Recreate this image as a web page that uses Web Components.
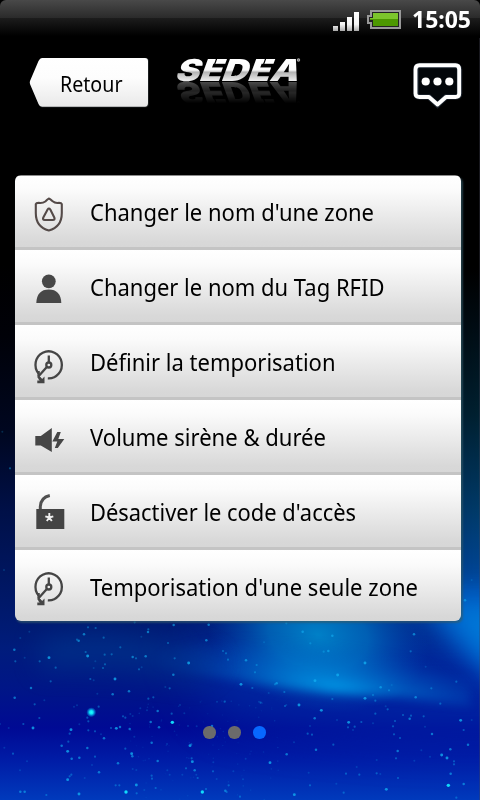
<!DOCTYPE html>
<html lang="fr">
<head>
<meta charset="utf-8">
<title>SEDEA</title>
<style>
html,body{margin:0;height:100%;background:#000;overflow:hidden}
body{font-family:"Noto Sans","Open Sans",sans-serif;color:#000}
</style>
</head>
<body>
<alarm-screen>
  <status-bar slot="status" time="15:05"></status-bar>
  <title-bar slot="header" back="Retour"></title-bar>
  <menu-list>
    <menu-row icon="shield" w="284" first>Changer le nom d'une zone</menu-row>
    <menu-row icon="user" w="294.5">Changer le nom du Tag RFID</menu-row>
    <menu-row icon="clock" w="245.5">Définir la temporisation</menu-row>
    <menu-row icon="siren" w="236">Volume sirène &amp; durée</menu-row>
    <menu-row icon="lock" w="266">Désactiver le code d'accès</menu-row>
    <menu-row icon="clock" w="328" last>Temporisation d'une seule zone</menu-row>
  </menu-list>
  <page-dots slot="footer" count="3" active="2"></page-dots>
</alarm-screen>

<script>
class BaseElement extends HTMLElement {
  connectedCallback() {
    if (this.shadowRoot) return;
    this.attachShadow({ mode: 'open' }).innerHTML = this.render();
    this.ready();
  }
  ready() {}
}

/* Text squeezed or stretched horizontally to an exact advance width. */
customElements.define('fit-text', class extends BaseElement {
  render() {
    return `<style>:host{display:block;white-space:nowrap;width:var(--w)}
      span{display:inline-block;transform-origin:0 50%}</style><span><slot></slot></span>`;
  }
  ready() {
    const w = +this.getAttribute('w');
    this.style.setProperty('--w', w + 'px');
    const s = this.shadowRoot.querySelector('span');
    s.style.transform = `scaleX(${w / s.getBoundingClientRect().width})`;
  }
});

customElements.define('night-sky', class extends BaseElement {
  render() {
    /* x, y, brightness (1-5); coordinates in thirds of a pixel, origin at y=600 */
    const stars = [
      [43,149,3],[46,184,2],[61,114,1],[88,95,1],[119,184,2],[147,173,4],[167,203,2],[152,244,2],[93,264,3],[44,293,3],[104,313,2],[133,301,1],
      [118,354,2],[99,384,4],[70,372,2],[26,384,1],[0,372,1],[252,103,3],[264,82,2],[287,84,2],[311,113,2],[236,122,3],[231,119,2],[263,168,4],
      [257,156,2],[286,184,1],[314,164,2],[335,163,2],[315,193,2],[309,204,2],[281,204,1],[361,142,2],[398,171,3],[408,175,2],[437,169,3],[424,110,1],
      [444,96,3],[445,88,2],[404,67,2],[521,75,3],[504,129,2],[524,175,2],[566,189,4],[619,121,3],[626,74,3],[669,153,2],[678,160,2],[684,179,2],
      [520,224,3],[417,208,2],[425,202,1],[345,237,4],[271,237,2],[281,241,1],[338,283,3],[387,274,3],[292,281,1],[296,320,2],[222,320,1],[231,316,1],
      [460,292,2],[445,296,2],[509,265,2],[496,261,1],[540,315,1],[473,333,3],[515,341,2],[553,340,1],[517,367,5],[452,366,3],[477,382,3],[389,387,3],
      [369,349,2],[376,353,2],[398,348,1],[391,342,1],[421,325,1],[265,364,2],[262,353,2],[213,389,4],[209,401,2],[238,373,1],[265,391,2],[285,394,2],
      [312,415,3],[303,403,1],[333,384,2],[349,385,4],[360,381,3],[403,410,1],[455,428,3],[501,432,1],[570,437,4],[574,433,2],[577,485,4],[575,475,2],
      [584,511,3],[593,534,2],[589,524,1],[558,505,2],[547,524,1],[509,524,1],[502,511,1],[473,483,3],[395,461,4],[397,469,3],[398,507,1],[409,510,1],
      [354,490,3],[376,446,2],[455,527,2],[456,536,2],[433,570,1],[409,555,4],[410,580,2],[378,576,5],[358,556,2],[347,556,2],[297,517,3],[276,495,1],
      [254,534,1],[238,473,3],[215,476,3],[203,454,4],[185,437,3],[205,425,2],[262,444,3],[285,470,2],[214,524,2],[209,529,2],[203,539,4],[237,582,4],
      [139,585,2],[74,575,3],[61,575,3],[60,511,1],[81,484,1],[39,461,2],[13,443,1],[607,576,5],[618,567,2],[639,514,2],[650,537,1],[640,487,1],
      [676,572,3],[686,556,2],[680,576,2],[674,305,2],[636,378,3],[590,379,1],[564,378,1],[441,331,1],[467,564,2],[700,514,1],[651,305,1],
      [74,173,1],[723,253,4],[738,181,3],[770,195,2],[765,217,2],
      [757,264,2],[830,250,3],[825,253,2],[853,276,2],[806,279,1],[782,308,2],[777,305,1],
      [859,70,2],[792,127,1],[908,95,3],[997,107,3],[931,130,2],[971,155,2],[985,153,3],[1095,189,4],[1013,225,4],
      [945,242,4],[997,297,2],[1095,295,4],[1119,285,2],[1142,262,3],[1167,271,2],[1126,302,2],[1175,255,1],[1247,292,3],[1294,265,2],[1369,245,2],
      [1242,103,3],[1232,154,2],[1277,200,1],[1321,311,2],[1163,328,2],[1157,319,1],[897,315,4],[855,318,2],[859,315,1],[964,331,4],[944,355,3],
      [1046,367,4],[1044,382,2],[1064,380,2],[1059,390,1],[1084,366,2],[1126,341,2],[1119,370,1],[930,378,1],[923,401,2],[936,404,2],[1011,360,1],
      [1185,363,2],[1179,379,2],[1209,345,2],[1229,356,3],[1233,347,2],[1271,349,2],[1275,380,1],[1296,402,3],[1382,361,4],[1391,390,2],[1415,360,1],
      [1404,434,3],[1351,448,3],[1325,465,4],[1341,474,4],[1362,484,2],[1362,493,2],[1352,521,3],[1345,556,5],[1391,552,3],[1369,593,2],
      [1264,451,1],[1290,470,1],[1193,453,3],[1188,475,2],[1243,482,1],[1194,534,2],[1130,520,2],[1141,522,1],[1159,568,4],[1031,578,2],[1038,521,2],
      [1078,524,2],[1070,501,1],[1009,551,1],[930,556,2],[926,518,1],[883,584,4],[810,488,4],[860,463,3],[948,449,3],[1000,434,2],[882,427,1],
      [737,476,1],[720,590,2],[729,538,1],[1130,480,1],[1182,403,2],[1200,414,2],[1395,1,3],[30,-395,2],[7,-505,1],[12,-90,1],[1415,-60,1]
    ];
    let dots = stars.map(([x, y, b]) =>
      `<circle cx="${x / 3}" cy="${600 + y / 3}" r="${[0, 1, 1.1, 1.25, 1.45, 1.7][b]}" fill="${b > 4 ? '#12e4ff' : '#11adf0'}" opacity="${[0, .22, .42, .62, .8, .95][b]}"/>`).join('');
    /* faint dust between the named stars */
    let seed = 17;
    const rnd = () => (seed = (seed * 16807) % 2147483647) / 2147483647;
    for (let i = 0; i < 90; i++)
      dots += `<circle cx="${130 + rnd() * 150}" cy="${700 + rnd() * 100}" r=".8" fill="#139be8" opacity="${.06 + rnd() * .14}"/>`;
    return `<style>:host{display:block}svg{display:block;width:100%;height:100%}</style>
    <svg viewBox="0 0 480 800" preserveAspectRatio="none" aria-hidden="true">
      <defs>
        <linearGradient id="b" x2="0" y2="1">
          <stop offset="0" stop-color="#000"/><stop offset=".33" stop-color="#000"/><stop offset=".42" stop-color="#000108"/>
          <stop offset=".54" stop-color="#000720"/><stop offset=".64" stop-color="#001048"/><stop offset=".75" stop-color="#001868"/>
          <stop offset=".81" stop-color="#001c7c"/><stop offset=".865" stop-color="#001588"/><stop offset=".91" stop-color="#000a94"/>
          <stop offset=".95" stop-color="#001ca6"/><stop offset="1" stop-color="#003abc"/></linearGradient>
        <linearGradient id="r" x2="0" y2="1">
          <stop offset="0" stop-color="#000"/><stop offset=".15" stop-color="#000c14"/><stop offset=".36" stop-color="#002030"/>
          <stop offset=".6" stop-color="#003a68"/><stop offset=".8" stop-color="#0048a0"/><stop offset="1" stop-color="#0050b4" stop-opacity="0"/></linearGradient>
        <linearGradient id="m" x2="1"><stop offset="0" stop-color="#000"/><stop offset=".35" stop-color="#000"/><stop offset="1" stop-color="#fff"/></linearGradient>
        <mask id="k"><rect y="270" width="480" height="430" fill="url(#m)"/></mask>
        <filter id="f11" filterUnits="userSpaceOnUse" x="-60" y="500" width="640" height="300" color-interpolation-filters="sRGB"><feGaussianBlur stdDeviation="13"/></filter>
        <filter id="f5" filterUnits="userSpaceOnUse" x="-60" y="500" width="640" height="300" color-interpolation-filters="sRGB"><feGaussianBlur stdDeviation="5"/></filter>
        <filter id="f22" filterUnits="userSpaceOnUse" x="-100" y="440" width="720" height="400" color-interpolation-filters="sRGB"><feGaussianBlur stdDeviation="24"/></filter>
        <radialGradient id="s"><stop offset="0" stop-color="#2ff"/><stop offset=".35" stop-color="#0ce4f8"/><stop offset="1" stop-color="#0af" stop-opacity="0"/></radialGradient>
        <radialGradient id="glow" gradientUnits="userSpaceOnUse" cx="0" cy="0" r="1" gradientTransform="translate(318 635) rotate(12) scale(112 76)">
          <stop offset="0" stop-color="#008ace" stop-opacity=".9"/><stop offset=".45" stop-color="#007cc8" stop-opacity=".65"/><stop offset="1" stop-color="#0050b8" stop-opacity="0"/></radialGradient>
        <radialGradient id="beam" gradientUnits="userSpaceOnUse" cx="0" cy="0" r="1" gradientTransform="translate(335 687) rotate(8) scale(185 42)">
          <stop offset="0" stop-color="#00a4ee" stop-opacity=".85"/><stop offset=".35" stop-color="#0092e0" stop-opacity=".5"/><stop offset="1" stop-color="#0068c8" stop-opacity="0"/></radialGradient>
      </defs>
      <rect width="480" height="800" fill="url(#b)"/>
      <rect y="270" width="480" height="400" fill="url(#r)" mask="url(#k)"/>
      <path d="M180 640H540V735Q400 745 220 715Z" fill="#0030b0" opacity=".6" filter="url(#f22)"/>
      <path d="M190 550H450V740H190Z" fill="url(#glow)"/>
      <path d="M100 600H470V706L400 697Q320 695 250 683Q170 670 100 655Z" fill="url(#beam)" filter="url(#f5)"/>
      <path d="M410 590H540V710Q458 665 410 590Z" fill="#0068d8" opacity=".7" filter="url(#f11)"/>
      <path d="M446 605H520V690Q466 655 446 605Z" fill="#0098ec" opacity=".5" filter="url(#f11)"/>
      <path d="M40 640Q120 620 220 660L200 680Q100 665 40 670Z" fill="#003c90" opacity=".5" filter="url(#f11)"/>
      ${dots}
      <circle cx="91.3" cy="712.3" r="5" fill="url(#s)"/>
      <path d="M479.5 36V800" stroke="#445" stroke-opacity=".35"/>
    </svg>`;
  }
});

customElements.define('status-bar', class extends BaseElement {
  render() {
    return `<style>
      :host{display:flex;justify-content:flex-end;align-items:flex-start;height:38px;box-sizing:border-box;padding-right:9px;
        border-radius:6px 6px 0 0;background:linear-gradient(#494949 0,#2b2b2b 17.5px,#1c1c1c 18px,#000 36px)}
      svg{display:block}
      .sig{margin:12px 8px 0 0}.bat{margin:10px 11px 0 0}
      fit-text{color:#fff;font-weight:700;font-size:23.500px;line-height:32px;margin-top:3px}
    </style>
    <svg class="sig" width="26" height="19"><defs><linearGradient id="g" x2="0" y2="19" gradientUnits="userSpaceOnUse"><stop stop-color="#fff"/><stop offset=".65" stop-color="#f4f4f4"/><stop offset="1" stop-color="#aaa"/></linearGradient></defs>
      <path fill="url(#g)" d="M0 14h5v5H0zM7 10h5v9H7zM14 5h5v14h-5zM21 0h5v19h-5z"/></svg>
    <svg class="bat" width="34" height="19"><path d="M4 1H33V18H4V13H1V6H4Z" fill="#222" stroke="#999" stroke-width="2"/>
      <path d="M6 3H31V9H3V8H6Z" fill="#7cc52c"/><path d="M3 9H31V16H6V10H3Z" fill="#4c9800"/></svg>
    <fit-text w="59">${this.getAttribute('time')}</fit-text>`;
  }
});

customElements.define('back-button', class extends BaseElement {
  render() {
    return `<style>
      :host{display:grid;width:120px;height:50px}
      svg,fit-text{grid-area:1/1}
      fit-text{font-size:22px;line-height:50px;margin-left:31px;margin-top:1px}
    </style>
    <svg width="120" height="51"><defs><linearGradient id="g" x2="0" y2="1"><stop stop-color="#fff"/><stop offset=".4" stop-color="#fdfdfd"/><stop offset="1" stop-color="#e9e9e9"/></linearGradient></defs>
      <path d="M13 1H116Q120 1 120 4V46Q120 50.500 116 50.500H13Q11 50 10 48L1.3 28Q.8 26 1.3 25L10 4Q11 1 13 1Z" fill="#1b1f20"/>
      <path d="M13 1H116Q119 1 119 4V46Q119 49.700 116 49.700H13Q10.500 49.500 9.500 47L1 27Q.5 25.500 1 24L9.500 4Q11 1 13 1Z" fill="url(#g)"/></svg>
    <fit-text w="62.5"><slot></slot></fit-text>`;
  }
});

customElements.define('brand-logo', class extends BaseElement {
  render() {
    return `<style>
      :host{display:block;width:128px;height:26px;-webkit-box-reflect:below -3px linear-gradient(transparent 10%,rgba(255,255,255,.34))}
      svg{display:block;overflow:visible}
      text{font-family:Inter,"Liberation Sans",sans-serif;font-weight:900}
    </style>
    <svg width="128" height="26"><defs><linearGradient id="g" x2="0" y1="-22" y2="0" gradientUnits="userSpaceOnUse">
      <stop stop-color="#fff"/><stop offset=".5" stop-color="#fafafa"/><stop offset=".6" stop-color="#b4b4b4"/><stop offset="1" stop-color="#ededed"/></linearGradient></defs>
      <g transform="translate(-1 24) skewX(-20)"><text font-size="30.3" textLength="123.5" lengthAdjust="spacingAndGlyphs" fill="url(#g)">SEDEA</text>
        <path d="M34.500 -23V-16M83.500 -23V-16" stroke="#000" stroke-width="1.300"/></g>
      <circle cx="123.500" cy="3" r="1.700" fill="#aaa"/><circle cx="123.500" cy="3" r=".7" fill="#666"/></svg>`;
  }
});

customElements.define('title-bar', class extends BaseElement {
  render() {
    return `<style>
      :host{display:flex;align-items:flex-start;height:138px;padding:19px 17px 0 29px;box-sizing:border-box}
      brand-logo{margin:0 auto 0 26px}
      svg{margin-top:4px;display:block}
    </style>
    <back-button>${this.getAttribute('back')}</back-button>
    <brand-logo></brand-logo>
    <svg width="51" height="49" viewBox="0 0 51 49"><path d="M7.500 4.500H44Q47.500 6 47.500 8.500V32.500Q47.500 36 43.500 36H34L25.500 44L17 36H8Q4 36 4 32.500V8Q4 5 7.500 4.500Z" fill="#02060a" stroke="#345" stroke-opacity=".5" stroke-width="5.500"/>
      <path d="M7.500 4.200H43.500Q47.200 4.200 47.200 8.500V32.500Q47.200 36 43.500 36H34L25.500 43.500L17 36H7.500Q3.500 36 3.500 32.500V8.500Q3.500 4.200 7.500 4.200Z" fill="none" stroke="#fff" stroke-width="3.900" stroke-linejoin="round"/>
      <g fill="#fff"><circle cx="13.700" cy="20.500" r="4.100"/><circle cx="25.500" cy="20.500" r="4.100"/><circle cx="37.300" cy="20.500" r="4.100"/></g></svg>`;
  }
});

/* 32x38 glyphs drawn in the menu rows */
const ICONS = {
  shield: `<g fill="none" stroke="#544a48" stroke-width="2.100" stroke-linejoin="round"><path d="M15.500 2.500Q14 3.500 12 5.500Q10 7 7 7Q3 6.500 2.500 8V17Q2.500 31 15.500 34.500Q28.500 31 28.500 17V8Q28 6.500 24 7Q21.500 7 19 5Q17 3 15.500 2.500Z"/><path d="M14.300 13.500L10 21.500Q9 24 11.500 24H19.500Q22 24 21 21.500L17 13.500Q15.600 11.500 14.300 13.500Z"/></g>`,
  user: `<g fill="#474747"><circle cx="15.500" cy="9.300" r="6.900"/><path d="M3 31Q3.500 17.500 15.500 17.500Q27.500 17.500 28 31Z"/></g>`,
  clock: `<g fill="none" stroke="#454545" stroke-width="2.300"><path d="M14.500 32.300A13.200 13.500 0 1 0 5.500 27.800"/><path d="M15.500 9.500V16"/><circle cx="15.500" cy="19" r="2.500"/><path d="M13.500 21L5 30.500"/><path d="M5.300 25V31L9 35.500"/></g><path d="M4 37.200H11.200V30.500L8.800 33L7 31L5 33L6.500 34.500H4Z" fill="#454545"/>`,
  siren: `<g fill="#464646"><path d="M2 15H7.500L18.500 7V31L7.500 24.500H2Z"/><path d="M24 11H27.500L25 18H31L24.500 27H21.500L24 20.500H19Z"/></g>`,
  lock: `<path d="M7 19V15.500Q7.500 6.500 16.500 4.500" fill="none" stroke="#505050" stroke-width="3"/><rect x="3" y="18" width="28" height="20" fill="#444"/><path d="M16 22V26.500M16 26.500L12 25.300M16 26.500L20 25.300M16 26.500L13.500 30M16 26.500L18.500 30" stroke="#eee" stroke-width="1.900"/>`
};

customElements.define('menu-row', class extends BaseElement {
  render() {
    const icon = this.getAttribute('icon');
    const last = this.hasAttribute('last');
    const first = this.hasAttribute('first');
    const up = { shield: 20, user: 22, clock: last ? 18 : 21, siren: 21, lock: 16 }[icon];
    return `<style>
      :host{display:flex;align-items:flex-start;height:75px;box-sizing:border-box;padding-left:18px;
        border-bottom:3px solid #c4c4c4;background:linear-gradient(#fff 0,#fbfbfb 14px,#d8d8d8 66px,#d7d7d7)}
      :host([first]){border-top:1px solid #8c8c8c}
      :host([last]){height:71px;border-bottom:0}
      svg{display:block;flex:none;margin-top:${up}px}
      fit-text{font-size:24px;line-height:33px;margin:${first ? 19 : 20}px 0 0 25px}
    </style>
    <svg width="32" height="38" viewBox="-.3 0 32 38" aria-hidden="true">${ICONS[icon]}</svg>
    <fit-text w="${this.getAttribute('w')}"><slot></slot></fit-text>`;
  }
});

customElements.define('menu-list', class extends BaseElement {
  render() {
    return `<style>
      :host{display:block;margin:-1px 19px 0 15px;box-shadow:1.500px 2px 2px rgba(50,90,105,.65);border-radius:6px}
      div{border-radius:6px;overflow:hidden}
    </style><div><slot></slot></div>`;
  }
});

customElements.define('page-dots', class extends BaseElement {
  render() {
    const active = +this.getAttribute('active');
    const dots = Array.from({ length: +this.getAttribute('count') }, (_, i) => `<i class="${i === active ? 'on' : ''}"></i>`).join('');
    return `<style>
      :host{display:flex;gap:12.500px;padding:105px 0 0 203.400px}
      i{width:12.500px;height:12.500px;border-radius:50%;background:#6b6b6b}
      .on{background:#0768ff}
    </style>${dots}`;
  }
});

customElements.define('alarm-screen', class extends BaseElement {
  render() {
    return `<style>
      :host{display:grid;width:480px;height:800px;overflow:hidden}
      night-sky,main{grid-area:1/1;min-width:0}
      main{display:flex;flex-direction:column}
    </style>
    <night-sky></night-sky>
    <main><slot name="status"></slot><slot name="header"></slot><slot></slot><slot name="footer"></slot></main>`;
  }
});
</script>
</body>
</html>
